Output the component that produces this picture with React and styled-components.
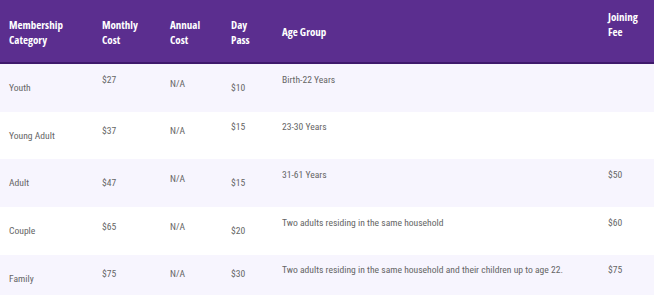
import React from "react";
import styled, { createGlobalStyle } from "styled-components";

const Global = createGlobalStyle`
  html, body { margin: 0; padding: 0; background: #ffffff; }
  body { font-family: "Roboto Condensed", "Open Sans", sans-serif; }
`;

const COLS = "93px 68px 61px 51px 326px 55px";

const Table = styled.div`
  width: 654px;
  display: flex;
  flex-direction: column;
`;

const HeadRow = styled.div`
  display: grid;
  grid-template-columns: ${COLS};
  height: 62px;
  background: #5b2e8f;
  border-bottom: 2px solid #3f1a6c;
`;

const HeadCell = styled.div`
  display: flex;
  align-items: center;
  padding: 1px 9px ${(p) => (p.$raise ? "16px" : "0")};
  color: #ffffff;
  font-family: "Open Sans", sans-serif;
  font-stretch: 75%;
  font-weight: 700;
  font-size: 11px;
  line-height: 15px;
  white-space: nowrap;
`;

const Row = styled.div`
  display: grid;
  grid-template-columns: ${COLS};
  height: 47.7px;
  background: ${(p) => (p.$alt ? "#f7f5fe" : "#ffffff")};
`;

const PAD = { t: "7.5px", m: "11.5px", b: "16px" };

const Cell = styled.div`
  padding: ${(p) => PAD[p.$v]} 9px 0;
  color: #666666;
  font-family: "Roboto Condensed", sans-serif;
  font-size: 9.6px;
  line-height: 15px;
  white-space: nowrap;
`;

const rows = [
  [["Youth", "b"], ["$27", "t"], ["N/A", "m"], ["$10", "b"], ["Birth-22 Years", "t"], ["", "t"]],
  [["Young Adult", "b"], ["$37", "m"], ["N/A", "m"], ["$15", "t"], ["23-30 Years", "t"], ["", "t"]],
  [["Adult", "b"], ["$47", "b"], ["N/A", "m"], ["$15", "b"], ["31-61 Years", "t"], ["$50", "t"]],
  [["Couple", "b"], ["$65", "m"], ["N/A", "m"], ["$20", "b"], ["Two adults residing in the same household", "t"], ["$60", "t"]],
  [["Family", "b"], ["$75", "m"], ["N/A", "m"], ["$30", "m"], ["Two adults residing in the same household and their children up to age 22.", "t"], ["$75", "t"]],
];

export default function App() {
  return (
    <>
      <Global />
      <Table>
        <HeadRow>
          <HeadCell>Membership<br />Category</HeadCell>
          <HeadCell>Monthly<br />Cost</HeadCell>
          <HeadCell>Annual<br />Cost</HeadCell>
          <HeadCell>Day<br />Pass</HeadCell>
          <HeadCell>Age Group</HeadCell>
          <HeadCell $raise>Joining<br />Fee</HeadCell>
        </HeadRow>
        {rows.map((r, i) => (
          <Row key={i} $alt={i % 2 === 0}>
            {r.map(([t, v], j) => (
              <Cell key={j} $v={v}>{t}</Cell>
            ))}
          </Row>
        ))}
      </Table>
    </>
  );
}
